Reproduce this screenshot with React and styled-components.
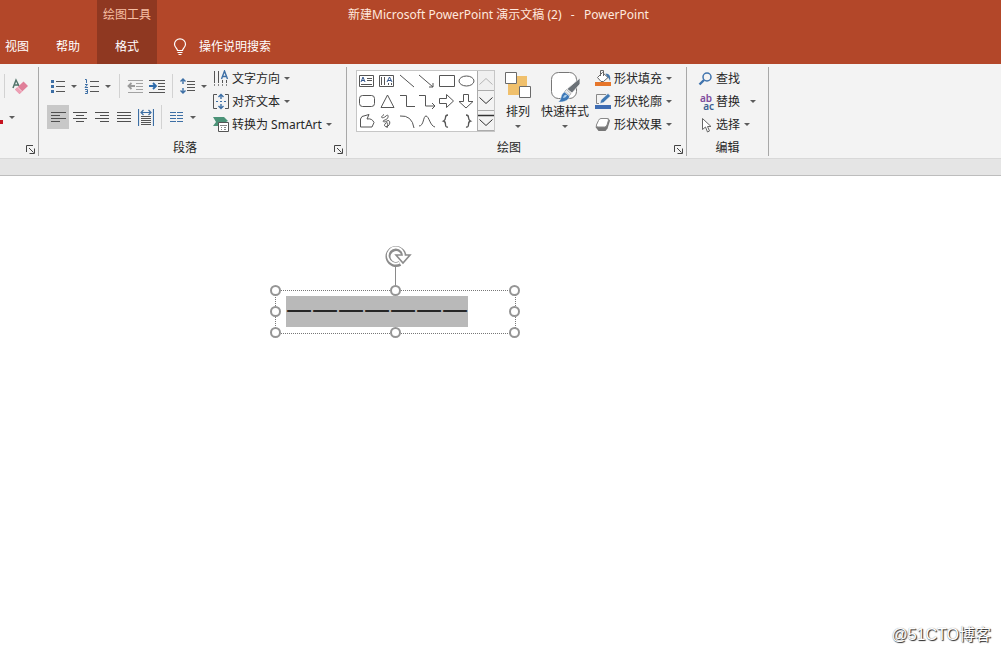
import React from "react";
import styled, { createGlobalStyle, css } from "styled-components";

const GlobalStyle = createGlobalStyle`
  *, *::before, *::after { box-sizing: border-box; }
  html, body, #root { height: 100%; }
  body { margin: 0; background: #fff; }
  body, button {
    font-family: "Noto Sans", "Noto Sans CJK SC", sans-serif;
    font-size: 12px;
    line-height: 16px;
    color: #262626;
  }
  svg { display: block; flex: none; }
`;

const Page = styled.div`
  min-height: 100%;
  display: flex;
  flex-direction: column;
  overflow: hidden;
`;

/* ---------- title bar and tabs ---------- */

const Header = styled.header`
  display: grid;
  grid-template-columns: 97px 60px 1fr;
  grid-template-rows: 30px 34px;
  background: #b34729;
  color: #fff;
`;

const Title = styled.h1`
  grid-area: 1 / 1 / 2 / -1;
  margin: 0;
  padding-right: 4px;
  align-self: center;
  text-align: center;
  font-size: 12px;
  font-weight: 400;
  white-space: pre;
  color: #ffe9df;
`;

const ContextTools = styled.div`
  grid-area: 1 / 2 / 3 / 3;
  display: grid;
  grid-template-rows: 30px 34px;
  background: #8f3821;
  text-align: center;
`;

const ContextLabel = styled.span`
  align-self: center;
  color: #f7bfa4;
`;

const tabReset = css`
  border: 0;
  padding: 0;
  background: none;
  color: #fff;
`;

const Tab = styled.button`
  ${tabReset}
`;

const TabRow = styled.nav`
  grid-area: 2 / 1 / 3 / 2;
  display: flex;
  gap: 27px;
  padding-left: 5px;
`;

const TellMe = styled.button`
  ${tabReset}
  grid-area: 2 / 3 / 3 / 4;
  justify-self: start;
  display: flex;
  align-items: center;
  gap: 12px;
  padding-left: 16px;
`;

/* ---------- ribbon ---------- */

const Ribbon = styled.div`
  display: flex;
  height: 94px;
  padding: 3px 0 2px;
  background: #f3f3f3;
`;

const Group = styled.section`
  width: ${(p) => p.$width}px;
  flex: none;
  display: grid;
  grid-template-rows: 72px 17px;
  border-right: 1px solid #a8a8a8;
`;

const GroupBody = styled.div`
  display: flex;
  min-width: 0;
  padding-left: ${(p) => p.$inset || 0}px;
`;

const GroupFooter = styled.div`
  display: flex;
  align-items: center;
`;

const GroupName = styled.span`
  flex: 1;
  text-align: center;
`;

const Launcher = styled.button`
  width: 15px;
  height: 16px;
  padding: 4px 0 0 3px;
  border: 0;
  background: none;
`;

const ToolRows = styled.div`
  display: flex;
  flex-direction: column;
  gap: 7px;
  padding-top: 7px;
  width: ${(p) => p.$width}px;
`;

const ToolRow = styled.div`
  display: flex;
  align-items: center;
  height: 24px;
`;

const ToolButton = styled.button`
  width: 22px;
  height: 24px;
  padding: 0;
  border: 0;
  display: flex;
  align-items: center;
  justify-content: center;
  background: ${(p) => (p.$active ? "#c8c8c8" : "none")};
`;

const ArrowButton = styled.button`
  width: 12px;
  height: 24px;
  padding: 0 0 0 2px;
  border: 0;
  background: none;
`;

const Separator = styled.span`
  width: 1px;
  height: 24px;
  margin: 0 4px;
  background: #d2d2d2;
`;

const CommandList = styled.div`
  display: flex;
  flex-direction: column;
  align-items: flex-start;
`;

const Command = styled.button`
  display: flex;
  align-items: center;
  height: 23px;
  padding: 0;
  border: 0;
  background: none;
  white-space: nowrap;
  gap: ${(p) => (p.$wide ? 10 : 4)}px;
`;

const CommandFace = styled.span`
  display: flex;
  align-items: center;
  gap: 2px;
`;

const BigCommand = styled.button`
  width: ${(p) => p.$width}px;
  height: 66px;
  padding: 4px 0 0;
  border: 0;
  background: none;
  display: flex;
  flex-direction: column;
  align-items: center;
  white-space: nowrap;
`;

const BigPicture = styled.span`
  height: 33px;
`;

const BigLabel = styled.span`
  margin-bottom: 5px;
`;

const BigCommands = styled.div`
  display: flex;
  gap: 4px;
  padding: 0 5px;
`;

const Gallery = styled.div`
  display: flex;
  height: 62px;
  margin-top: 3px;
  border: 1px solid #c6c6c6;
  background: #fff;
`;

const ShapeGrid = styled.div`
  display: grid;
  grid-template-columns: repeat(6, 20px);
  grid-template-rows: repeat(3, 20px);
`;

const ShapeButton = styled.button`
  padding: 0;
  border: 0;
  background: none;
`;

const GalleryScroll = styled.div`
  display: grid;
  grid-template-rows: repeat(3, 20px);
  width: 17px;
`;

const ScrollButton = styled.button`
  display: flex;
  align-items: center;
  justify-content: center;
  padding: 0;
  border: 0;
  border-left: 1px solid #ababab;
  border-bottom: 1px solid #ababab;
  background: ${(p) => (p.disabled ? "#f0f0f0" : "#f3f3f3")};
`;

const Strip = styled.div`
  height: 18px;
  background: #e5e5e5;
  border-top: 1px solid #d8d8d8;
  border-bottom: 1px solid #bdbdbd;
`;

/* ---------- slide canvas ---------- */

const Canvas = styled.main`
  position: relative;
  flex: 1;
  min-height: 476px;
  background: #fff;
`;

const TextBox = styled.div`
  position: absolute;
  left: 275px;
  top: 114px;
  width: 241px;
  height: 44px;
  padding: 5px 10px;
  border: 1px dotted #777;
`;

const SelectedText = styled.p`
  margin: 0;
  padding-bottom: 4px;
  width: max-content;
  font-family: "Noto Sans CJK SC", sans-serif;
  font-size: 26px;
  line-height: 27px;
  background: #b9b9b9;
  color: #262626;
`;

const Handle = styled.span`
  position: absolute;
  left: ${(p) => p.$x};
  top: ${(p) => p.$y};
  width: 11px;
  height: 11px;
  margin: -6px 0 0 -6px;
  border: 2px solid #959595;
  border-radius: 50%;
  background: #fff;
`;

const Rotator = styled.svg`
  position: absolute;
  left: 107px;
  top: -46px;
`;

const Watermark = styled.span`
  position: absolute;
  right: 10px;
  bottom: 7px;
  font-family: "Liberation Sans", "Noto Sans CJK SC", sans-serif;
  font-size: 16px;
  line-height: 20px;
  color: #fff;
  text-shadow: 1px 1px 1px #222, 0 0 1px #888;
`;

/* ---------- drawings ---------- */

const Icon = ({ w = 16, h = 16, children, ...rest }) => (
  <svg width={w} height={h} viewBox={`0 0 ${w} ${h}`} fill="none" stroke="#555" aria-hidden="true" {...rest}>
    {children}
  </svg>
);

const Caret = () => (
  <Icon w={6} h={3} stroke="none"><path d="M0 0h6L3 3z" fill="#5c5c5c" /></Icon>
);

const LaunchIcon = () => (
  <Icon w={9} h={9} stroke="#444"><path d="M.5 7V.5H7M3 3l4.500 4.500M8.500 3.500v5h-5" /></Icon>
);

const Bulb = () => (
  <Icon w={14} h={18} stroke="#fff">
    <path d="M4.500 12.500c0-2-3-3-3-6.200a5.500 5.500 0 0 1 11 0c0 3.200-3 4.200-3 6.200zM4.500 14.500h5M5.500 16.500h3" strokeWidth="1.200" />
  </Icon>
);

const EraserIcon = () => (
  <Icon w={16} h={17} stroke="none">
    <path d="M1 10 4 2l3 6M2.500 7h3.500" stroke="#53746b" strokeWidth="1.500" />
    <path d="m3 11.500 8.500-8 4.500 4.500-8.500 8z" fill="#e07f99" />
    <path d="m3 11.500 2.500-2.500 4.500 4.500-2.500 2.500z" fill="#eda0b4" />
    <path d="m5.500 9 4.500 4.500" stroke="#f8dbe2" />
  </Icon>
);

const Bullets = () => (
  <Icon>
    <path d="M6 3.500h9M6 8.500h9M6 13.500h9" />
    <path d="M1 2h3v3H1zM1 7h3v3H1zM1 12h3v3H1z" fill="#3d6fa5" stroke="none" />
  </Icon>
);

const Numbering = () => (
  <Icon>
    <path d="M6 3.500h9M6 8.500h9M6 13.500h9" />
    <path d="M1 1.500h1.500V5M1 6.500h2.500L1 9.500h3M1 11.500h2.500v4H1M1.500 13.500h2" stroke="#3d6fa5" />
  </Icon>
);

const Outdent = () => (
  <Icon stroke="#a3a3a3">
    <path d="M1 2.500h15M9 5.500h7M9 8.500h7M9 11.500h7M1 14.500h15" />
    <path d="M8 8H1.500M4.500 5l-3 3 3 3" stroke="#9a9a9a" strokeWidth="1.800" />
  </Icon>
);

const Indent = () => (
  <Icon>
    <path d="M0 2.500h16M9 5.500h7M9 8.500h7M9 11.500h7M0 14.500h16" />
    <path d="M0 8h6.500M4 5l3 3-3 3" stroke="#2f6cab" strokeWidth="1.800" />
  </Icon>
);

const LineSpacing = () => (
  <Icon>
    <path d="M7 3.500h8M7 6.500h8M7 9.500h8M7 12.500h8" />
    <path d="M3 1v5M3 10v5M.5 3.500 3 1l2.500 2.500M.5 12.500 3 15l2.500-2.500" stroke="#3d6fa5" strokeWidth="1.400" />
  </Icon>
);

const AlignLines = ({ lines }) => (
  <Icon>
    <path d={lines.map(([x, len], i) => `M${x} ${3.5 + i * 3}h${len}`).join("")} stroke="#4f4f4f" />
  </Icon>
);

const Distribute = () => (
  <Icon w={16} h={17}>
    <path d="M.5 0v17M15.500 0v17M3 3.500h10M5.500 1 3 3.500 5.500 6M10.500 1 13 3.500 10.500 6" stroke="#3d6fa5" strokeWidth="1.200" />
    <path d="M3 7.500h10M3 9.500h10M3 11.500h10M3 13.500h10M3 15.500h10" />
  </Icon>
);

const Columns = () => (
  <Icon>
    <path d="M1 3.500h6M1 6.500h6M1 9.500h6M1 12.500h6M8 3.500h6M8 6.500h6M8 9.500h6M8 12.500h6" stroke="#3d6fa5" />
  </Icon>
);

const TextDirection = () => (
  <Icon w={17} h={17}>
    <path d="M1.500 1v12M5.500 1v12M9.500 10v3M13.500 10v3" />
    <path d="M1.500 14v2M5.500 14v2M9.500 14v2M13.500 14v2" stroke="#888" />
    <path d="M8.500 9 11.500 1l3 8M9.500 6.500h4" stroke="#3d6fa5" strokeWidth="1.400" />
  </Icon>
);

const AlignText = () => (
  <Icon w={17} h={17}>
    <path d="M4 1.500H.500v14H4M12 1.500h3.500v14H12" />
    <path d="M3 8.500h2M7 8.500h2M11 8.500h2" stroke="#3d6fa5" />
    <path d="M8 1v5M5.500 4 8 1.500 10.500 4M8 11v5M5.500 13 8 15.500 10.500 13" stroke="#3d6fa5" strokeWidth="1.400" />
  </Icon>
);

const SmartArt = () => (
  <Icon w={17} h={17}>
    <path d="M0 1h11l4 4-2 1H6v4H0l3-4z" fill="#4b9277" stroke="none" />
    <path d="M5.500 6.500h10v9h-10z" fill="#fff" />
    <path d="M7 9.500h7M8 11.500h1M11 11.500h2M8 13.500h1M11 13.500h2" stroke="#888" />
  </Icon>
);

const ArrangeIcon = () => (
  <Icon w={28} h={28}>
    <path d="M13 5h10v10H13zM4 13h11v11H4z" fill="#f0c06c" stroke="none" />
    <path d="M1.500 1.500h11v11h-11zM15.500 15.500h11v11h-11z" fill="#fff" stroke="#6a6a6a" />
  </Icon>
);

const QuickStyles = () => (
  <Icon w={30} h={32}>
    <rect x="1.500" y="1.500" width="25" height="26" rx="7" fill="#fff" stroke="#777" />
    <path d="M30 7v6l-8 9-5-4z" fill="#6b7177" stroke="#f3f3f3" strokeWidth=".8" />
    <path d="m16.500 18.500 4.500 4-1.500 2-5-4z" fill="#e8ebee" stroke="#888" strokeWidth=".6" />
    <path d="M8 31c4-2 2-8 6.500-10l5 4c0 4-5 6.500-11.500 6z" fill="#3c78b8" stroke="#f3f3f3" strokeWidth=".6" />
    <path d="M13 27q1-4 4-3-1 3-4 3z" fill="#a9cdea" stroke="none" />
  </Icon>
);

const FillIcon = () => (
  <Icon w={17} h={17}>
    <path d="M0 12h16v4H0z" fill="#e6762b" stroke="none" />
    <path d="m2.500 7.500 5-5 5.500 5-4.500 4H6z" fill="#fff" stroke="#666" />
    <path d="M5.500 6V.500h3V6" stroke="#666" />
    <path d="M10.500 3.500c4 0 5.500 3 4.500 7.500-1-2.500-2-4-3-4.500z" fill="#4576a8" stroke="none" />
  </Icon>
);

const OutlineIcon = () => (
  <Icon w={17} h={17}>
    <path d="M0 12h16v4H0z" fill="#3f6db3" stroke="none" />
    <path d="M11 1.500H1.500v9H4" stroke="#888" />
    <path d="m5 10.500 1-3.500 7-6.500 2.500 2.500-7 6.500z" fill="#3f78b3" stroke="#f3f3f3" strokeWidth=".5" />
  </Icon>
);

const EffectsIcon = () => (
  <Icon w={17} h={17}>
    <path d="M5 3.500 13 2l2 2.500-2.500 8-2 2.500H3.500L.5 11z" fill="#777" stroke="none" />
    <path d="M6 2.500h6q2 0 1.400 2L12 9q-.6 2-2.500 2H3Q.8 11 1.400 9L3.500 4.500Q4.300 2.500 6 2.500z" fill="#fff" stroke="#888" />
  </Icon>
);

const FindIcon = () => (
  <Icon stroke="#3f73ad">
    <circle cx="9" cy="6" r="4" strokeWidth="1.500" />
    <path d="M6 9 1.500 13.500" strokeWidth="2.400" />
  </Icon>
);

const Letters = styled.span`
  display: block;
  width: 16px;
  font-size: 10px;
  font-weight: 600;
  line-height: 8px;
`;

const First = styled.span`
  display: block;
  color: #7d4a9c;
`;

const Second = styled.span`
  display: block;
  text-align: right;
  color: #3d5f92;
`;

const ReplaceIcon = () => (
  <Letters aria-hidden="true"><First>ab</First><Second>ac</Second></Letters>
);

const PointerIcon = () => (
  <Icon>
    <path d="M4.500 1.500v11l3-2.500 2 5 2-1-2-4.500h3.500z" fill="#fff" stroke="#666" />
  </Icon>
);

const shapes = [
  ["文本框", <><path d="M2.500 4.500h14v11h-14zM10 7.500h5M10 9.500h5M4 13.500h11" /><path d="m4 11 2-5 2 5M5 9.500h2" stroke="#34568c" /></>],
  ["竖排文本框", <><path d="M2.500 4.500h14v11h-14zM4.500 6v8M7.500 6v8M11.500 12v2M14.500 12v2" /><path d="m10 11 2.500-5 2.500 5M11 9.500h3" stroke="#34568c" /></>],
  ["直线", <path d="m3 4 14 12" />],
  ["箭头", <path d="m2 4 14 12M16 12v4h-4" />],
  ["矩形", <path d="M2.500 4.500h15v11h-15z" />],
  ["椭圆", <ellipse cx="9.500" cy="10" rx="7.500" ry="5" />],
  ["圆角矩形", <rect x="2.500" y="4.500" width="15" height="11" rx="3" />],
  ["三角形", <path d="m10.500 4 6.500 12.500h-13z" />],
  ["肘形连接符", <path d="M3 4.500h6.500v11H18" />],
  ["肘形箭头", <path d="M2 4.500h6.500v10.500H18M15 12l3 3-3 3" />],
  ["右箭头", <path d="M2.500 7.500h7v-4l7 6.500-7 6.500v-4h-7z" />],
  ["下箭头", <path d="M6.500 3.500h5v7h4.500l-7 6.500-7-6.500h4.500z" />],
  ["任意多边形", <path d="M5 5.500 12 3.500 10 8q5-1 7 3.500l-2 4.500H3.500V8z" />],
  ["自由曲线", <path d="M7 3.500C2 7 6 8 9 5s3 3-1 4-1 3 2 1 4 3 1 5-5-1-2-3 1 4 1 5" />],
  ["弧形", <path d="M3 5q12-1 14 12" />],
  ["曲线", <path d="M2 15c5 0 4-10 7-10s4 10 9 11" />],
  ["左大括号", <path d="M11 4Q8.500 4 8.500 6.500T6.500 10q2 .5 2 3.500t2.500 2.500" strokeWidth="1.300" />],
  ["右大括号", <path d="M9 4q2.500 0 2.500 2.500t2 3.500q-2 .5-2 3.500T9 16" strokeWidth="1.300" />],
];

const alignments = [
  ["左对齐", [[1, 15], [1, 9], [1, 15], [1, 9]]],
  ["居中", [[1, 14], [4, 8], [1, 14], [4, 8]]],
  ["右对齐", [[1, 14], [6, 9], [1, 14], [6, 9]]],
  ["两端对齐", [[1, 14], [1, 14], [1, 14], [1, 14]]],
];

const handles = [
  ["0%", "0%"], ["50%", "0%"], ["100%", "0%"],
  ["0%", "50%"], ["100%", "50%"],
  ["0%", "100%"], ["50%", "100%"], ["100%", "100%"],
];

const MenuCommand = ({ icon, label, menu = true, wide }) => (
  <Command $wide={wide}>
    <CommandFace>{icon}{label}</CommandFace>
    {menu && <Caret />}
  </Command>
);

const Launch = ({ label }) => (
  <Launcher aria-label={label}><LaunchIcon /></Launcher>
);

export default function App() {
  return (
    <Page>
      <GlobalStyle />
      <Header>
        <TabRow>
          <Tab>视图</Tab>
          <Tab>帮助</Tab>
        </TabRow>
        <ContextTools>
          <ContextLabel>绘图工具</ContextLabel>
          <Tab>格式</Tab>
        </ContextTools>
        <Title>{"新建Microsoft PowerPoint 演示文稿 (2)   -   PowerPoint"}</Title>
        <TellMe><Bulb />操作说明搜索</TellMe>
      </Header>

      <Ribbon>
        <Group $width={39} aria-label="字体">
          <GroupBody>
            <ToolRows $width={38}>
              <ToolRow>
                <Separator />
                <ToolButton aria-label="清除格式"><EraserIcon /></ToolButton>
              </ToolRow>
              <ToolRow>
                <Icon w={7} h={14}><path d="M0 10h3v4H0z" fill="#c5121f" stroke="none" /></Icon>
                <ArrowButton aria-label="字体颜色"><Caret /></ArrowButton>
              </ToolRow>
            </ToolRows>
          </GroupBody>
          <GroupFooter><GroupName /><Launch label="字体设置" /></GroupFooter>
        </Group>

        <Group $width={308}>
          <GroupBody $inset={8}>
            <ToolRows $width={166}>
              <ToolRow>
                <ToolButton aria-label="项目符号"><Bullets /></ToolButton>
                <ArrowButton aria-label="项目符号选项"><Caret /></ArrowButton>
                <ToolButton aria-label="编号"><Numbering /></ToolButton>
                <ArrowButton aria-label="编号选项"><Caret /></ArrowButton>
                <Separator />
                <ToolButton aria-label="减少缩进" disabled><Outdent /></ToolButton>
                <ToolButton aria-label="增加缩进"><Indent /></ToolButton>
                <Separator />
                <ToolButton aria-label="行距"><LineSpacing /></ToolButton>
                <ArrowButton aria-label="行距选项"><Caret /></ArrowButton>
              </ToolRow>
              <ToolRow>
                {alignments.map(([name, lines], i) => (
                  <ToolButton key={name} aria-label={name} $active={i === 0}>
                    <AlignLines lines={lines} />
                  </ToolButton>
                ))}
                <ToolButton aria-label="分散对齐"><Distribute /></ToolButton>
                <Separator />
                <ToolButton aria-label="分栏"><Columns /></ToolButton>
                <ArrowButton aria-label="分栏选项"><Caret /></ArrowButton>
              </ToolRow>
            </ToolRows>
            <CommandList>
              <MenuCommand icon={<TextDirection />} label="文字方向" />
              <MenuCommand icon={<AlignText />} label="对齐文本" />
              <MenuCommand icon={<SmartArt />} label="转换为 SmartArt" />
            </CommandList>
          </GroupBody>
          <GroupFooter><GroupName>段落</GroupName><Launch label="段落设置" /></GroupFooter>
        </Group>

        <Group $width={340}>
          <GroupBody $inset={9}>
            <Gallery>
              <ShapeGrid>
                {shapes.map(([name, drawing]) => (
                  <ShapeButton key={name} aria-label={name}><Icon w={20} h={20}>{drawing}</Icon></ShapeButton>
                ))}
              </ShapeGrid>
              <GalleryScroll>
                <ScrollButton aria-label="上一行" disabled><Icon w={14} h={8} stroke="#b5b5b5"><path d="m.5 7.500 6.500-6 6.500 6" /></Icon></ScrollButton>
                <ScrollButton aria-label="下一行"><Icon w={14} h={8} stroke="#333"><path d="m.5.5 6.500 6 6.500-6" /></Icon></ScrollButton>
                <ScrollButton aria-label="更多形状"><Icon w={16} h={14} stroke="#333"><path d="M0 1.500h16" strokeWidth="1.500" /><path d="m1.500 5.500 6.500 6 6.500-6" /></Icon></ScrollButton>
              </GalleryScroll>
            </Gallery>
            <BigCommands>
              <BigCommand $width={36}><BigPicture><ArrangeIcon /></BigPicture><BigLabel>排列</BigLabel><Caret /></BigCommand>
              <BigCommand $width={50}><BigPicture><QuickStyles /></BigPicture><BigLabel>快速样式</BigLabel><Caret /></BigCommand>
            </BigCommands>
            <CommandList>
              <MenuCommand icon={<FillIcon />} label="形状填充" />
              <MenuCommand icon={<OutlineIcon />} label="形状轮廓" />
              <MenuCommand icon={<EffectsIcon />} label="形状效果" />
            </CommandList>
          </GroupBody>
          <GroupFooter><GroupName>绘图</GroupName><Launch label="设置形状格式" /></GroupFooter>
        </Group>

        <Group $width={82}>
          <GroupBody $inset={11}>
            <CommandList>
              <MenuCommand icon={<FindIcon />} label="查找" menu={false} />
              <MenuCommand icon={<ReplaceIcon />} label="替换" wide />
              <MenuCommand icon={<PointerIcon />} label="选择" />
            </CommandList>
          </GroupBody>
          <GroupFooter><GroupName>编辑</GroupName></GroupFooter>
        </Group>
      </Ribbon>
      <Strip />

      <Canvas>
        <TextBox>
          <SelectedText>一一一一一一一</SelectedText>
          <Rotator width="30" height="46" viewBox="0 0 30 46" fill="none" aria-hidden="true">
            <path d="M12.500 22v24" stroke="#8a8a8a" />
            <path d="M17 18.500a8 8 0 1 1 4-7.500" stroke="#8c8c8c" strokeWidth="5" />
            <path d="M13 10h14l-7 8z" fill="#fff" stroke="#8c8c8c" strokeWidth="1.600" />
            <path d="M16.500 17.600a8 8 0 1 1 4-5" stroke="#fff" strokeWidth="1.800" />
          </Rotator>
          {handles.map(([x, y]) => <Handle key={x + y} $x={x} $y={y} />)}
        </TextBox>
        <Watermark>@51CTO博客</Watermark>
      </Canvas>
    </Page>
  );
}
